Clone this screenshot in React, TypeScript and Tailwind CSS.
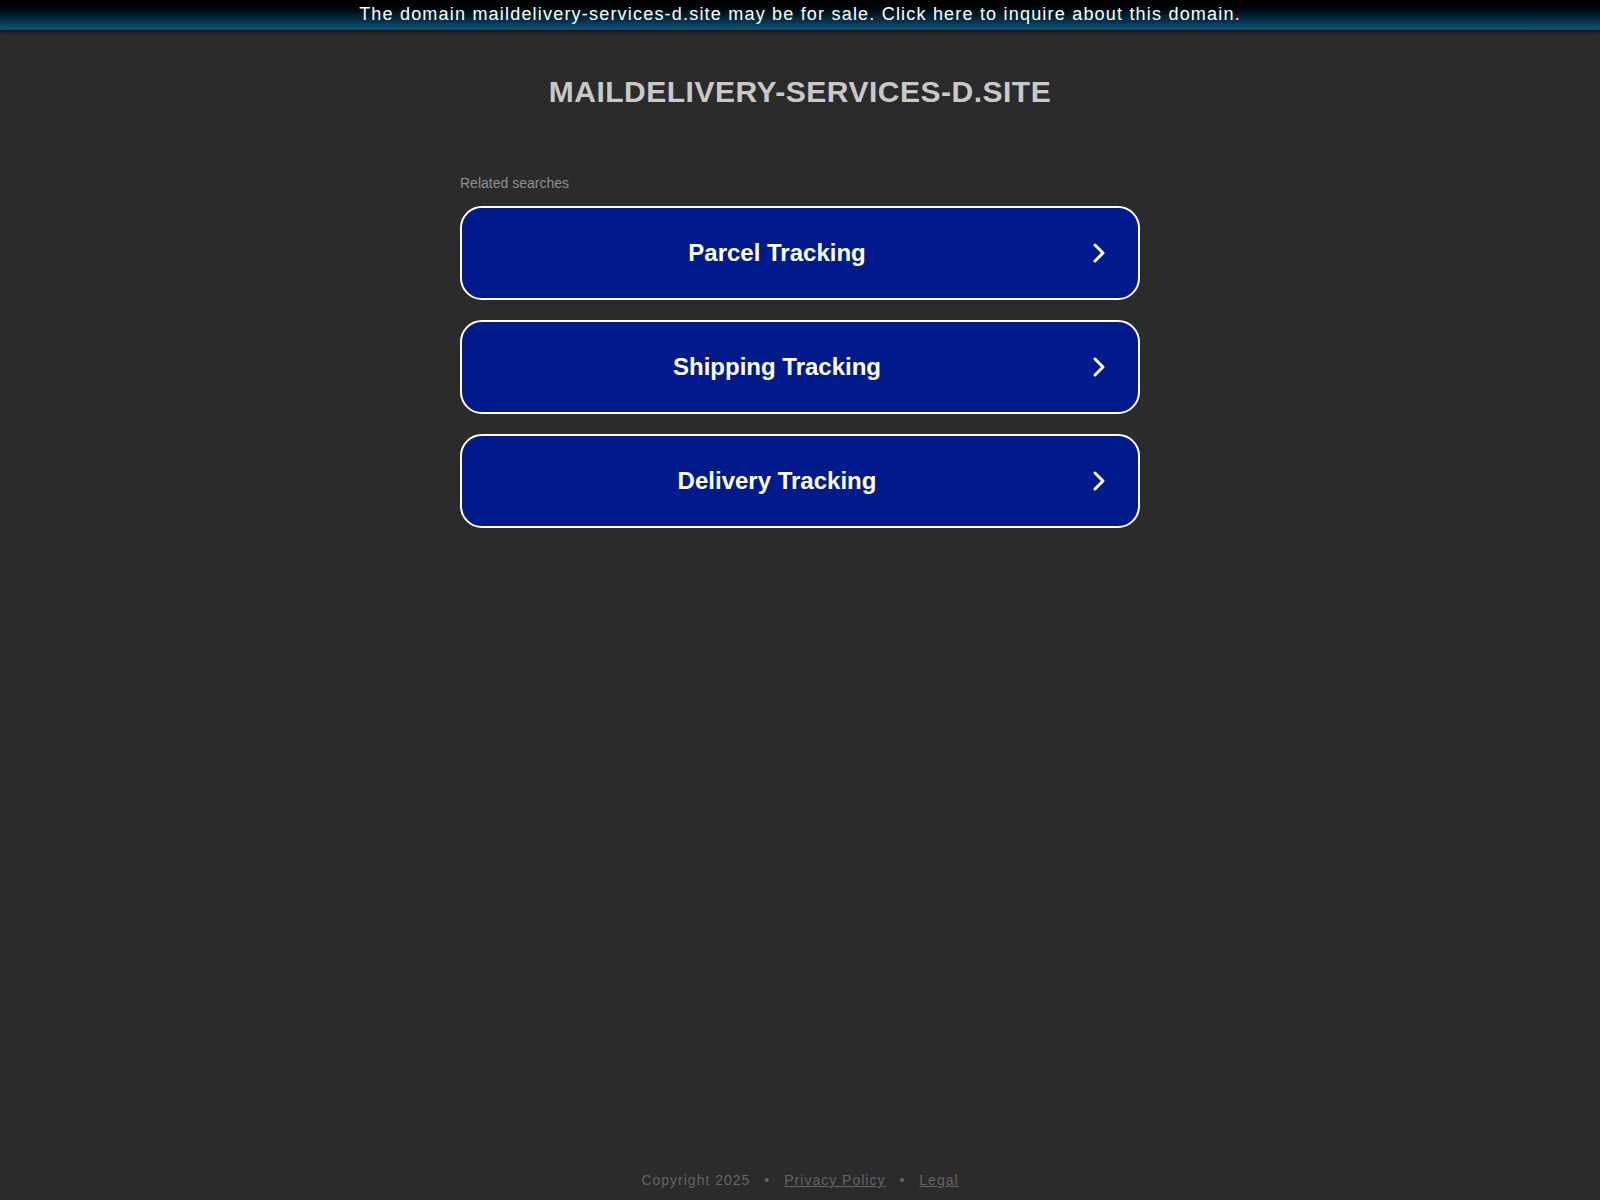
import React from 'react'

const searches = ['Parcel Tracking', 'Shipping Tracking', 'Delivery Tracking']

function Chevron() {
  return (
    <svg width="14" height="22" viewBox="0 0 14 22" fill="none" aria-hidden="true">
      <path d="M3 3l8 8-8 8" stroke="white" strokeWidth="3" strokeLinecap="round" strokeLinejoin="round" />
    </svg>
  )
}

export default function App() {
  return (
    <div className="min-h-[1200px] bg-[#2b2b2b] flex flex-col font-['Liberation_Sans',Arial,sans-serif]">
      <div className="h-[30px] bg-gradient-to-b from-[#000000] to-[#0b5277] border-b border-[#1d4459] shadow-[0_2px_3px_rgba(0,0,0,0.6)] flex items-center justify-center">
        <a className="text-white text-[18px] tracking-[1.2px] leading-none -mt-[2px] cursor-pointer">
          The domain maildelivery-services-d.site may be for sale. Click here to inquire about this domain.
        </a>
      </div>

      <h1 className="mt-[44px] text-center text-[30px] leading-[36px] font-bold tracking-[0.5px] text-[#c9c9c9]">
        MAILDELIVERY-SERVICES-D.SITE
      </h1>

      <div className="mx-auto w-[680px] mt-[65px]">
        <p className="text-[14px] leading-[16px] text-[#8f8f8f]">Related searches</p>
        <div className="mt-[15px] flex flex-col gap-[20px]">
          {searches.map((s) => (
            <a
              key={s}
              className="h-[94px] rounded-[22px] border-2 border-white bg-[#011a8c] flex items-center cursor-pointer"
            >
              <span className="flex-1 pl-[20px] text-center text-white text-[24px] font-bold leading-none">{s}</span>
              <span className="w-[66px] flex justify-center pr-[12px]">
                <Chevron />
              </span>
            </a>
          ))}
        </div>
      </div>

      <div className="mt-auto pb-[9px] flex justify-center items-center gap-[14px] text-[14px] tracking-[1px] text-[#656565]">
        <span>Copyright 2025</span>
        <span>•</span>
        <a className="underline cursor-pointer">Privacy Policy</a>
        <span>•</span>
        <a className="underline cursor-pointer">Legal</a>
      </div>
    </div>
  )
}
